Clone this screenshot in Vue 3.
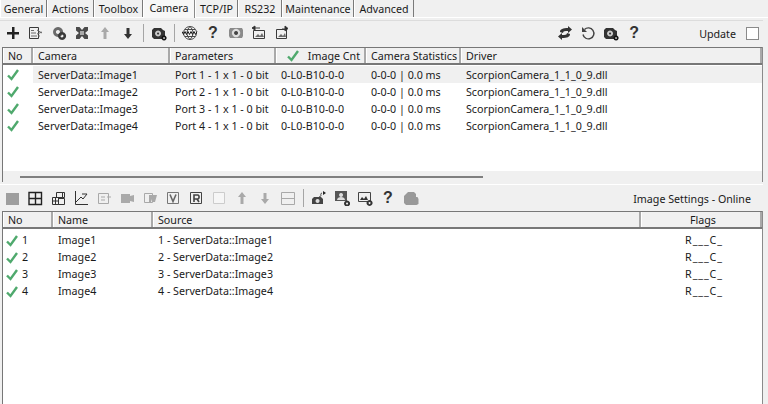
<script setup>
const tabs = [
  { label: 'General', w: 47 },
  { label: 'Actions', w: 47 },
  { label: 'Toolbox', w: 49 },
  { label: 'Camera', w: 52, active: true },
  { label: 'TCP/IP', w: 43 },
  { label: 'RS232', w: 44 },
  { label: 'Maintenance', w: 72 },
  { label: 'Advanced', w: 60 }
]
const k = '#3a3a3a', g = '#a9a9a9', m = '#6b6b6b'
const plus = { p: [{ d: 'M7 2h2.500v5H14v2.500H9.500V14H7V9.500H2V7h5z', f: '#222' }] }
const doc = { p: [{ d: 'M1.500 2.500h9v11h-9z', s: k }, { d: 'M3 5.500h3M3 8h5M3 11h6M9 5l5 3M9 9l5-2M10 11h2', s: m }] }
const gears = { p: [{ d: 'M7 2a5 5 0 1 0 .1 0zM7 5a2 2 0 1 1-.1 0z', f: m }, { d: 'M11 7a4 4 0 1 0 .1 0zM11 9.500a1.500 1.500 0 1 1-.1 0z', f: k }] }
const cross = { p: [{ d: 'M2 2h3.500L8 5l2.500-3H14v3.500L11 8l3 2.500V14h-3.500L8 11l-2.500 3H2v-3.500L5 8 2 5.500z', f: '#4a4a4a' }, { d: 'M6 6h4v4H6z', f: '#aaa' }] }
const upG = { p: [{ d: 'M8 2l4 5H9.500v7h-3V7H4z', f: g }] }
const downD = { p: [{ d: 'M8 14l4-5H9.500V3h-3v6H4z', f: '#333' }] }
const downG = { p: [{ d: 'M8 14l4-5H9.500V3h-3v6H4z', f: g }] }
const camGear = { p: [{ d: 'M1 5l2-2h7l2 2 2 1v6l-2 2H3l-2-2z', f: '#333' }, { d: 'M7 5.500a3 3 0 1 0 .1 0z', f: '#ccc' }, { d: 'M7 7.500a1 1 0 1 0 .1 0z', f: '#333' }, { d: 'M13 10.500a2.500 2.500 0 1 0 .1 0z', f: '#111' }, { d: 'M13 12.300a.8.8 0 1 0 .1 0z', f: '#eee' }] }
const globe = { p: [{ d: 'M8 1.500a6.500 6.500 0 1 0 .1 0zM3 4.500h10M3 11.500h10M8 1.500c-4 4-4 9 0 13M8 1.500c4 4 4 9 0 13', s: '#4a4a4a' }, { d: 'M0 6.500l1.500 3 1.500-3 1.500 3 1.500-3 1.500 3 1.500-3 1.500 3 1.500-3 1.500 3 1.500-3', s: '#222' }] }
const eye = { p: [{ d: 'M2 3h12l1 2v6l-1 2H2l-1-2V5z', f: '#8a8a8a' }, { d: 'M8 3.800a4.200 4.200 0 1 0 .1 0z', f: '#ddd' }, { d: 'M8 6a2 2 0 1 0 .1 0z', f: '#444' }] }
const picIn = { p: [{ d: 'M2.500 5.500h11v8h-11z', s: k }, { d: 'M1 3l3-2v4zM4 3h5', f: '#222', s: k }, { d: 'M4 12l3-3 2 2 2-3 2 4z', f: m }] }
const picOut = { p: [{ d: 'M2.500 4.500h10v9h-10z', s: k }, { d: 'M8 4h4M11 1l3 2.500L11 6z', f: '#222', s: k }, { d: 'M4 12l3-3 2 2 2-3 1 4z', f: m }] }
const sync = { p: [{ d: 'M3 7c0-3 3-4 8-4V1l4 3.500L11 8V6c-3 0-5 0-5 2zM13 9c0 3-3 4-8 4v2l-4-3.500L5 8v2c3 0 5 0 5-2z', f: '#333' }] }
const undo = { p: [{ d: 'M4.500 4.500a5.500 5.500 0 1 1-1.500 5', s: '#444', w: 1.4 }, { d: 'M2 2v5h5z', f: '#444' }] }
const square = { p: [{ d: 'M2 3h13v12H2z', f: '#9e9e9e' }] }
const split = { p: [{ d: 'M2 2.500h12.500v12H2zM8.500 2.500v12M2 8.500h12.500', s: '#222', w: 1.4 }] }
const grid = { p: [{ d: 'M2.500 7.500h6v7h-6zM8.500 8.500h6v6h-6zM6.500 2.500h6v5h-6zM12.500 2.500h2v5h-2zM5.500 7.500v7M2.500 11h6', s: '#333' }] }
const chart = { p: [{ d: 'M2.500 1v13.500H15', s: '#333' }, { d: 'M3 12l5-5 2 2 4-5M9 4h5', s: '#333' }] }
const docG = { p: [{ d: 'M2.500 3.500h10v10h-10z', s: g }, { d: 'M5 7h4M5 10h4M11 7h4', s: g }] }
const camG = { p: [{ d: 'M2 4h9v9H2z', f: '#aaa' }, { d: 'M11 6l4-1v7l-4-1z', f: '#aaa' }] }
const wBox = { p: [{ d: 'M2.500 3.500h8v9h-8z', s: g }, { d: 'M7 5h8l-2 7h-2l-1-3-1 3H7z', f: g }] }
const vBox = { p: [{ d: 'M2.500 2.500h11v11h-11z', s: '#777' }, { d: 'M5 4.500l3 7 3-7', s: '#666', w: 1.6 }] }
const rBox = { p: [{ d: 'M2.500 2.500h11v11h-11z', s: '#444' }, { d: 'M6 12V5h4l1 1v2l-1 1H6M9 9l2 3', s: '#444', w: 1.6 }] }
const blank = { p: [{ d: 'M2.500 2.500h11v11h-11z', s: '#ccc', b: '#f6f6f6' }] }
const rows2 = { p: [{ d: 'M1.500 2.500h13v12h-13zM1.500 8.500h13', s: g }] }
const route = { p: [{ d: 'M1 9l2-2h7l2 2v5H1z', f: '#444' }, { d: 'M6.500 9a2 2 0 1 0 .1 0z', f: '#ddd' }, { d: 'M8 7c4-1 0-3 3-4', s: '#444' }, { d: 'M12 1l3 2-3 2z', f: '#222' }] }
const people = { p: [{ d: 'M1 1h12v10H1z', f: '#555' }, { d: 'M7 3a2 2 0 1 0 .1 0zM3 10c0-4 8-4 8 0z', f: '#ddd' }, { d: 'M13 10.500a3 3 0 1 0 .1 0z', f: '#333' }, { d: 'M13 12.500a1 1 0 1 0 .1 0z', f: '#eee' }] }
const picGear = { p: [{ d: 'M1.500 2.500h12v9h-12z', s: '#444' }, { d: 'M3 10l2-3 2 2 2-3 2 4z', f: '#333' }, { d: 'M12.500 10a3 3 0 1 0 .1 0z', f: '#333' }, { d: 'M12.500 12a1 1 0 1 0 .1 0z', f: '#eee' }] }
const camBlob = { p: [{ d: 'M3 4l2-2h6l2 2v3h1.500l1 2v5l-2 1H3l-2-2V6z', f: '#999' }] }

const tool1L = [plus, doc, gears, cross, upG, downD, 'sep', camGear, 'sep', globe, '?', eye, picIn, picOut]
const tool1R = [sync, undo, camGear, '?']
const tool2 = [square, split, grid, chart, docG, camG, wBox, vBox, rBox, blank, upG, downG, rows2, 'sep', route, people, picGear, '?', camBlob]
const cams = [1, 2, 3, 4]
</script>

<template>
  <div class="app">
    <nav class="tabs">
      <span v-for="t in tabs" :key="t.label" class="tab" :class="{ active: t.active }" :style="{ width: t.w + 'px' }">{{ t.label }}</span>
    </nav>

    <section class="panel">
      <div class="bar bar-one">
        <template v-for="(it, i) in tool1L" :key="'a' + i">
          <span v-if="it === 'sep'" class="sep"></span>
          <span v-else-if="it === '?'" class="help">?</span>
          <svg v-else class="ic" viewBox="0 0 16 16"><path v-for="(s, j) in it.p" :key="j" :d="s.d" :fill="s.f || s.b || 'none'" :stroke="s.s || 'none'" :stroke-width="s.w || 1" /></svg>
        </template>
        <span class="grow"></span>
        <template v-for="(it, i) in tool1R" :key="'b' + i">
          <span v-if="it === '?'" class="help">?</span>
          <svg v-else class="ic" viewBox="0 0 16 16"><path v-for="(s, j) in it.p" :key="j" :d="s.d" :fill="s.f || 'none'" :stroke="s.s || 'none'" :stroke-width="s.w || 1" /></svg>
        </template>
        <span class="update">Update</span>
        <span class="check"></span>
      </div>

      <div class="table table-one">
        <div class="head cols-one">
          <span>No</span><span>Camera</span><span>Parameters</span>
          <span class="cnt"><svg class="tick" viewBox="0 0 14 14"><path d="M2 7.500l3.500 3.500L12 2" fill="none" stroke="#4fa96d" stroke-width="2.400" /></svg><em>Image Cnt</em></span>
          <span>Camera Statistics</span><span>Driver</span>
        </div>
        <div class="body body-one">
          <div v-for="n in cams" :key="n" class="row cols-one" :class="{ first: n === 1 }">
            <span class="tick-cell"><svg class="tick" viewBox="0 0 14 14"><path d="M2 7.500l3.500 3.500L12 2" fill="none" stroke="#4fa96d" stroke-width="2.400" /></svg></span>
            <span class="shade">ServerData::Image{{ n }}</span>
            <span class="shade">Port {{ n }} - 1 x 1 - 0 bit</span>
            <span class="shade">0-L0-B10-0-0</span>
            <span class="shade">0-0-0 | 0.0 ms</span>
            <span class="shade">ScorpionCamera_1_1_0_9.dll</span>
          </div>
        </div>
        <div class="scroll"><i></i></div>
      </div>

      <div class="bar bar-two">
        <template v-for="(it, i) in tool2" :key="'c' + i">
          <span v-if="it === 'sep'" class="sep"></span>
          <span v-else-if="it === '?'" class="help">?</span>
          <svg v-else class="ic" viewBox="0 0 16 16"><path v-for="(s, j) in it.p" :key="j" :d="s.d" :fill="s.f || s.b || 'none'" :stroke="s.s || 'none'" :stroke-width="s.w || 1" /></svg>
        </template>
        <span class="grow"></span>
        <span class="settings">Image Settings - Online</span>
      </div>

      <div class="table table-two">
        <div class="head cols-two">
          <span>No</span><span>Name</span><span>Source</span><span class="center">Flags</span>
        </div>
        <div class="body">
          <div v-for="n in cams" :key="n" class="row cols-two">
            <span class="no"><svg class="tick" viewBox="0 0 14 14"><path d="M2 7.500l3.500 3.500L12 2" fill="none" stroke="#4fa96d" stroke-width="2.400" /></svg>{{ n }}</span>
            <span>Image{{ n }}</span>
            <span>{{ n }} - ServerData::Image{{ n }}</span>
            <span class="center flags">R___C_</span>
          </div>
        </div>
      </div>
    </section>
  </div>
</template>

<style>
html, body { margin: 0; background: #f0f0f0; overflow: hidden; }
</style>

<style scoped>
.app { width: 768px; height: 404px; display: flex; flex-direction: column; overflow: hidden; background: #f0f0f0; font: 10.7px/17px "Noto Sans", "Open Sans", sans-serif; color: #1a1a1a; }
.tabs { height: 18px; display: flex; border-bottom: 1px solid #fff; box-sizing: border-box; }
.tab { box-sizing: border-box; height: 17px; line-height: 18px; text-align: center; border-right: 1px solid #7a7a7a; border-left: 1px solid #fff; flex: none; }
.tab.active { height: 18px; line-height: 16px; background: #f7f7f7; border-right: 1px solid #8a8a8a; }
.panel { flex: 1; display: flex; flex-direction: column; min-height: 0; padding-right: 5px; }
.bar { display: flex; align-items: center; box-sizing: border-box; gap: 7px; }
.bar-one { height: 27px; margin-top: 2px; padding: 0 3px 2px 5px; border-top: 1px solid #dcdcdc; }
.bar-two { height: 27px; margin-top: 2px; padding: 0 12px 0 4px; border-top: 1px solid #fff; }
.ic { width: 16px; height: 16px; flex: none; display: block; }
.help { width: 16px; flex: none; text-align: center; font: bold 16px/16px "Liberation Sans", sans-serif; color: #333; }
.sep { width: 1px; height: 18px; background: #a5a5a5; flex: none; }
.grow { flex: 1; }
.update { margin-left: 50px; margin-right: 3px; padding-top: 2px; }
.settings { padding-top: 2px; }
.check { width: 11px; height: 11px; background: #fff; border: 1px solid #8a8a8a; flex: none; margin-right: 1px; }
.table { margin-left: 2px; border-left: 1px solid #777; border-right: 1px solid #8a8a8a; display: flex; flex-direction: column; }
.table-one { height: 135px; }
.table-two { flex: 1; min-height: 0; }
.head { height: 18px; box-sizing: border-box; border-top: 1px solid #777; border-bottom: 2px solid #777; background: #f0f0f0; flex: none; }
.head > span { padding: 1px 0 0 4px; border-right: 2px solid #a9a9a9; border-left: 1px solid #fff; box-sizing: border-box; line-height: 14px; white-space: nowrap; overflow: hidden; }
.table-two .head > span { line-height: 17px; padding-top: 0; }
.cols-one { display: grid; grid-template-columns: 30px 137px 106px 90px 95px 1fr; }
.cols-two { display: grid; grid-template-columns: 50px 100px 488px 1fr; }
.center { text-align: center; }
.cnt { display: flex; align-items: center; }
.cnt .tick { margin-left: 5px; }
.cnt em { font-style: normal; margin-left: auto; padding-right: 4px; }
.tick { width: 14px; height: 14px; flex: none; display: block; }
.body { background: #fff; }
.table-two .body { flex: 1; padding-top: 3px; }
.body-one { flex: 1; min-height: 0; padding-top: 1px; }
.row { height: 17px; line-height: 17px; white-space: nowrap; }
.body-one .row { line-height: 19px; }
.row > span { padding-left: 5px; box-sizing: border-box; overflow: hidden; }
.first .shade { background: #f0f0f0; }
.tick-cell { display: flex; align-items: center; padding-left: 3px !important; }
.no { display: flex; align-items: center; gap: 3px; padding-left: 2px !important; }
.flags { letter-spacing: .9px; }
.scroll { height: 11px; padding: 5px 0 0 17px; box-sizing: border-box; flex: none; }
.scroll i { display: block; width: 463px; height: 2px; background: #7f7f7f; }
</style>
